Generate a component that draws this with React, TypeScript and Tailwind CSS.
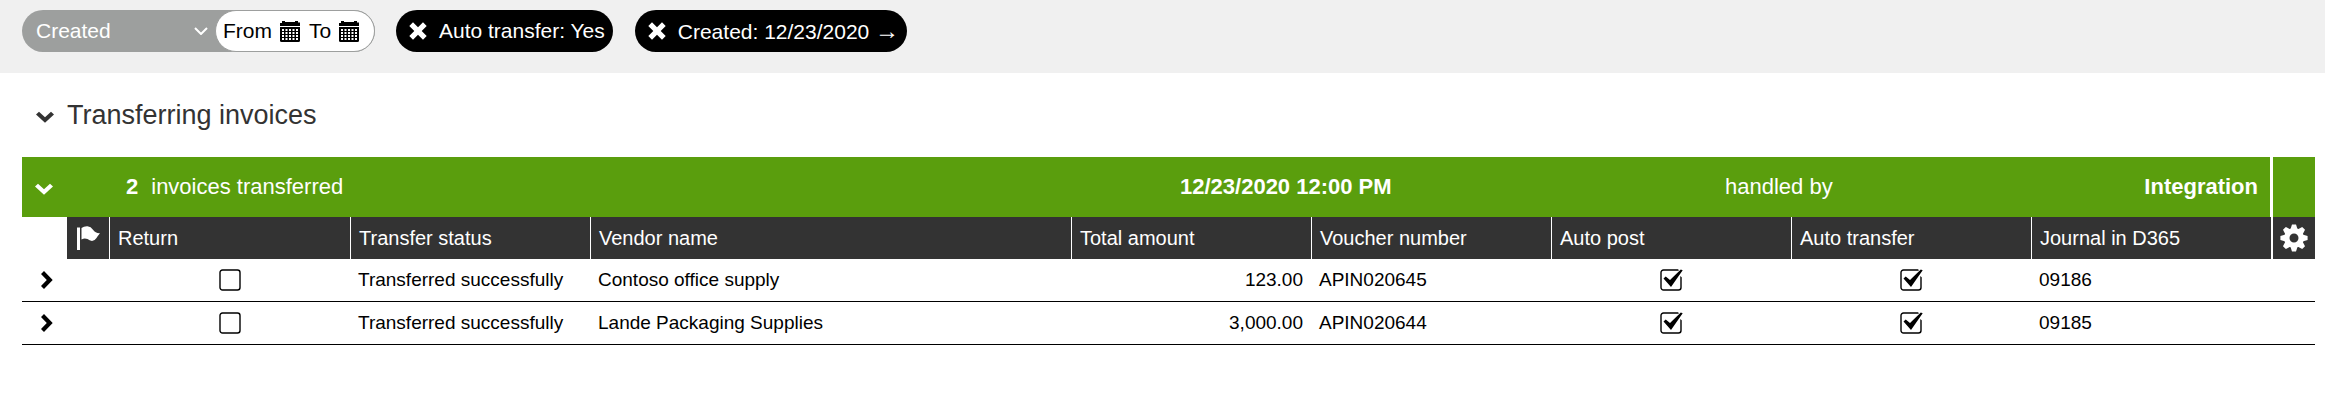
import { useState } from "react";
import type { ReactNode } from "react";

const invoices = [
  { status: "Transferred successfully", vendor: "Contoso office supply", total: "123.00", voucher: "APIN020645", journal: "09186" },
  { status: "Transferred successfully", vendor: "Lande Packaging Supplies", total: "3,000.00", voucher: "APIN020644", journal: "09185" },
];

const headings = ["Return", "Transfer status", "Vendor name", "Total amount", "Voucher number", "Auto post", "Auto transfer"];

function ChevronDown() {
  return (
    <svg viewBox="0 0 18 12" className="h-3 w-[18px] fill-current" aria-hidden="true">
      <path d="M0 3.600 3 .7 9 6.200 15 .7l3 2.900-9 8.200z" />
    </svg>
  );
}

function ChevronRight() {
  return (
    <svg viewBox="0 0 12 18" className="h-[18px] w-3 fill-current" aria-hidden="true">
      <path d="M0 3 3 0l8.700 9L3 18l-3-3 5.800-6z" />
    </svg>
  );
}

function Calendar() {
  return (
    <svg viewBox="0 0 20 21" className="h-[21px] w-5 fill-black" aria-hidden="true">
      <path d="M0 2h2V0h3v1h10V0h3v1.500h2V5H0z" />
      <path d="M0 6h20v13.500q0 1.500-1.500 1.500h-17Q0 21 0 19.500z" />
      {[8, 11, 14, 17].map((y) =>
        [2, 5.5, 9, 12.5, 16].map((x) => (
          <rect key={`${x}-${y}`} x={x} y={y} width="2" height="2" fill="#fff" />
        )),
      )}
    </svg>
  );
}

function Cross() {
  return (
    <svg viewBox="0 0 18 18" className="size-[18px] fill-white" aria-hidden="true">
      <path d="M4 .3 9 5.300l5-5L17.700 4l-5 5 5 5-3.700 3.700-5-5-5 5L.3 14l5-5-5-5z" />
    </svg>
  );
}

function Flag() {
  return (
    <svg viewBox="0 0 23 24" className="mx-auto h-6 w-[23px] fill-white" aria-hidden="true">
      <path d="M0 1.500h3V24H0z" />
      <path d="M4.500 2Q7 0 10.500.2 14 .6 16 3.800 18.500 7.500 23 7.200 21 9.500 19.500 12q-2 3-4.500 3-2.500-.2-4.500-1.900Q7.500 11.500 4.500 13.500z" />
    </svg>
  );
}

function Gear() {
  const teeth = [0, 45, 90, 135, 180, 225, 270, 315];
  return (
    <svg viewBox="-14 -14 28 28" className="size-7" aria-hidden="true">
      <circle r="7.200" fill="none" stroke="#fff" strokeWidth="5.400" />
      {teeth.map((angle) => (
        <path key={angle} transform={`rotate(${angle})`} d="M-3.600-8.500-2-13.600H2L3.600-8.500z" fill="#fff" />
      ))}
    </svg>
  );
}

function CheckBox({ label, initial = false }: { label: string; initial?: boolean }) {
  const [checked, setChecked] = useState(initial);
  return (
    <label className="relative mx-auto block size-[22px]">
      <input
        type="checkbox"
        aria-label={label}
        checked={checked}
        onChange={(event) => setChecked(event.target.checked)}
        className="absolute inset-0 size-full appearance-none"
      />
      <svg viewBox="0 0 22 22" className="pointer-events-none absolute inset-0 size-full overflow-visible" aria-hidden="true">
        <rect x="1" y="1" width="20" height="20" rx="2.500" fill="#fff" stroke="#000" strokeWidth="1.400" />
        {checked && (
          <>
            <path d="M18-1h5v10l-3-2z" fill="#fff" />
            <path d="m3.500 9.500 2.200-1.900 4.300 3.500L20.800.6l1.900.6L11 18z" />
          </>
        )}
      </svg>
    </label>
  );
}

function FilterTag({ children }: { children: ReactNode }) {
  return (
    <button type="button" className="flex h-[42px] items-center gap-3 rounded-full bg-black pr-2 pl-[13px] text-white">
      <Cross />
      <span>{children}</span>
    </button>
  );
}

export default function App() {
  return (
    <div className="min-w-[1600px] bg-white font-['Liberation_Sans',Arial,sans-serif] text-black">
      <header className="flex h-[73px] items-start bg-[#f0f0f0] pt-[10px] pl-[22px] text-[21px] leading-6">
        <div className="mr-[21px] flex h-[42px] w-[353px] rounded-full bg-[#9d9f9e]">
          <div className="relative flex flex-1 items-center">
            <select aria-label="Filter field" className="w-full appearance-none bg-transparent pl-[14px] text-white">
              <option>Created</option>
            </select>
            <svg viewBox="0 0 14 8" className="pointer-events-none absolute right-[7px] h-2 w-[14px] fill-none stroke-white stroke-2" aria-hidden="true">
              <path d="m1 1 6 6 6-6" />
            </svg>
          </div>
          <div className="flex w-40 items-center gap-[9px] rounded-full border border-[#9d9f9e] bg-white pl-[7px]">
            <button type="button" className="flex items-center gap-2">From <Calendar /></button>
            <button type="button" className="flex items-center gap-2">To <Calendar /></button>
          </div>
        </div>
        <div className="flex gap-[22px]">
          <FilterTag>Auto transfer: Yes</FilterTag>
          <FilterTag>
            Created: 12/23/2020 <span className="text-2xl leading-6">→</span>
          </FilterTag>
        </div>
      </header>

      <main className="pr-[10px] pb-14 pl-[22px]">
        <h1 className="flex h-[84px] items-center text-[27px] leading-8 text-[#333]">
          <button type="button" aria-label="Collapse section" className="w-[45px] pt-1 pl-[14px]">
            <ChevronDown />
          </button>
          Transferring invoices
        </h1>

        <section className="flex h-[60px] gap-[3px] text-[22px] leading-7 text-white">
          <div className="grid flex-1 grid-cols-[1158fr_545fr_545fr] items-center bg-[#5a9e0d]">
            <div className="flex items-center">
              <button type="button" aria-label="Collapse group" className="w-[104px] pt-1 pl-[13px]">
                <ChevronDown />
              </button>
              <b>2</b>
              <span className="pl-[13px]">invoices transferred</span>
            </div>
            <b>12/23/2020 12:00 PM</b>
            <div className="flex justify-between pr-3">
              <span>handled by</span>
              <b>Integration</b>
            </div>
          </div>
          <div className="w-[42px] bg-[#5a9e0d]" />
        </section>

        <table className="w-full table-fixed border-separate border-spacing-0 text-left text-[19px] leading-6">
          <colgroup>
            <col className="w-[45px]" />
            <col className="w-[43px]" />
            <col className="w-[241px]" />
            <col className="w-[240px]" />
            <col />
            <col className="w-[240px]" />
            <col className="w-[240px]" />
            <col className="w-[240px]" />
            <col className="w-[240px]" />
            <col className="w-[239px]" />
            <col className="w-11" />
          </colgroup>
          <thead>
            <tr className="h-[42px] text-xl leading-6 text-white">
              <td />
              <th className="border-r border-white bg-[#333]" aria-label="Flag">
                <Flag />
              </th>
              {headings.map((heading) => (
                <th key={heading} className="border-r border-white bg-[#333] px-2 font-normal">
                  {heading}
                </th>
              ))}
              <th className="bg-[#333] px-2 font-normal">Journal in D365</th>
              <th className="border-l-2 border-white bg-[#333]">
                <button type="button" aria-label="Table settings" className="mx-auto block">
                  <Gear />
                </button>
              </th>
            </tr>
          </thead>
          <tbody>
            {invoices.map((invoice) => (
              <tr key={invoice.voucher} className="h-[43px] *:border-b *:border-black *:pr-[9px] *:pl-[7px]">
                <td>
                  <button type="button" aria-label={`Expand ${invoice.voucher}`} className="ml-3 block">
                    <ChevronRight />
                  </button>
                </td>
                <td />
                <td><CheckBox label={`Return ${invoice.voucher}`} /></td>
                <td>{invoice.status}</td>
                <td>{invoice.vendor}</td>
                <td className="text-right">{invoice.total}</td>
                <td>{invoice.voucher}</td>
                <td><CheckBox label={`Auto post ${invoice.voucher}`} initial /></td>
                <td><CheckBox label={`Auto transfer ${invoice.voucher}`} initial /></td>
                <td>{invoice.journal}</td>
                <td />
              </tr>
            ))}
          </tbody>
        </table>
      </main>
    </div>
  );
}
